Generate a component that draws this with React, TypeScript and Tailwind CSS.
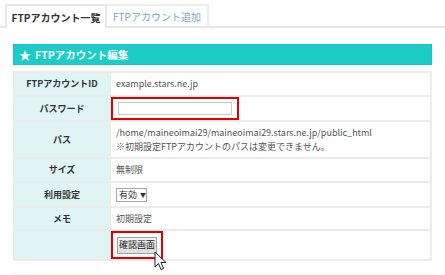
import React from 'react';

const font = { fontFamily: '"Noto Sans CJK JP", "Noto Sans", sans-serif' };

function Row({ label, children, h }: { label: string; children?: React.ReactNode; h: string }) {
  return (
    <div className={`flex border-b-2 border-[#ececec] last:border-b-0 ${h}`}>
      <div className="flex w-[96px] shrink-0 items-center justify-center whitespace-nowrap border-r-2 border-[#ececec] bg-[#e0f4f4] text-[9px] font-bold text-[#333]">
        {label}
      </div>
      <div className="flex flex-1 flex-col justify-center whitespace-nowrap pl-[5px] text-[9px] text-[#555]">{children}</div>
    </div>
  );
}

export default function App() {
  return (
    <div className="relative h-[275px] w-[445px] overflow-hidden bg-white" style={font}>
      <div className="flex h-[28px] items-end border-b-2 border-[#e6e6e6] pl-[5px] pt-[5px]">
        <div className="-mb-[2px] flex h-[24px] w-[102px] items-center justify-center whitespace-nowrap border-x-2 border-t-2 border-[#e6e6e6] bg-white text-[10px] font-bold text-[#333]">
          FTPアカウント一覧
        </div>
        <div className="flex h-[22px] w-[102px] items-center justify-center whitespace-nowrap border-r-2 border-t-2 border-[#ececec] text-[10px] text-[#7ea3c9]">
          FTPアカウント追加
        </div>
      </div>

      <div className="px-[13px] pt-[16px]">
        <div className="flex h-[21px] items-center gap-[4px] whitespace-nowrap border border-[#14c6bf] bg-[#1ccdc7] pl-[5px] text-[10.5px] font-bold text-white">
          <span className="text-[12px]">★</span>
          <span>FTPアカウント編集</span>
        </div>

        <div className="mt-[6px] border-2 border-[#ececec]">
          <Row label="FTPアカウントID" h="h-[24px]">
            <span>example.stars.ne.jp</span>
          </Row>
          <Row label="パスワード" h="h-[25px]">
            <div className="-ml-[5px] flex h-[25px] w-[128px] items-center justify-center border-2 border-[#e00000]">
              <div className="h-[13px] w-[114px] border border-[#c8c8c8] bg-white" />
            </div>
          </Row>
          <Row label="パス" h="h-[37px]">
            <span className="leading-[14px]">/home/maineoimai29/maineoimai29.stars.ne.jp/public_html</span>
            <span className="leading-[14px]">※初期設定FTPアカウントのパスは変更できません。</span>
          </Row>
          <Row label="サイズ" h="h-[24px]">
            <span>無制限</span>
          </Row>
          <Row label="利用設定" h="h-[25px]">
            <div className="flex h-[14px] w-[31px] items-center gap-[3px] border border-[#a9a9a9] bg-white pl-[2px] text-[9px] text-[#333]">
              <span>有効</span>
              <span className="text-[6px]">▼</span>
            </div>
          </Row>
          <Row label="メモ" h="h-[23px]">
            <span>初期設定</span>
          </Row>
          <Row label="" h="h-[28px]">
            <div className="-ml-[5px] flex h-[28px] w-[52px] items-center justify-center border-2 border-[#e00000]">
              <div className="flex h-[17px] w-[40px] items-center justify-center border border-[#a0a0a0] bg-gradient-to-b from-[#f4f4f4] to-[#dedede] text-[9px] text-[#222]">
                確認画面
              </div>
            </div>
          </Row>
        </div>

        <div className="mt-[13px] h-[4px] bg-[#e4fbee]" />
      </div>

      <svg className="absolute left-[154px] top-[251px]" width="14" height="20" viewBox="0 0 14 20">
        <path d="M1 1 L1 16 L4.5 12.5 L7 18.5 L9.5 17.5 L7 11.5 L12 11.5 Z" fill="white" stroke="#222" strokeWidth="1" strokeLinejoin="round" />
      </svg>
    </div>
  );
}
